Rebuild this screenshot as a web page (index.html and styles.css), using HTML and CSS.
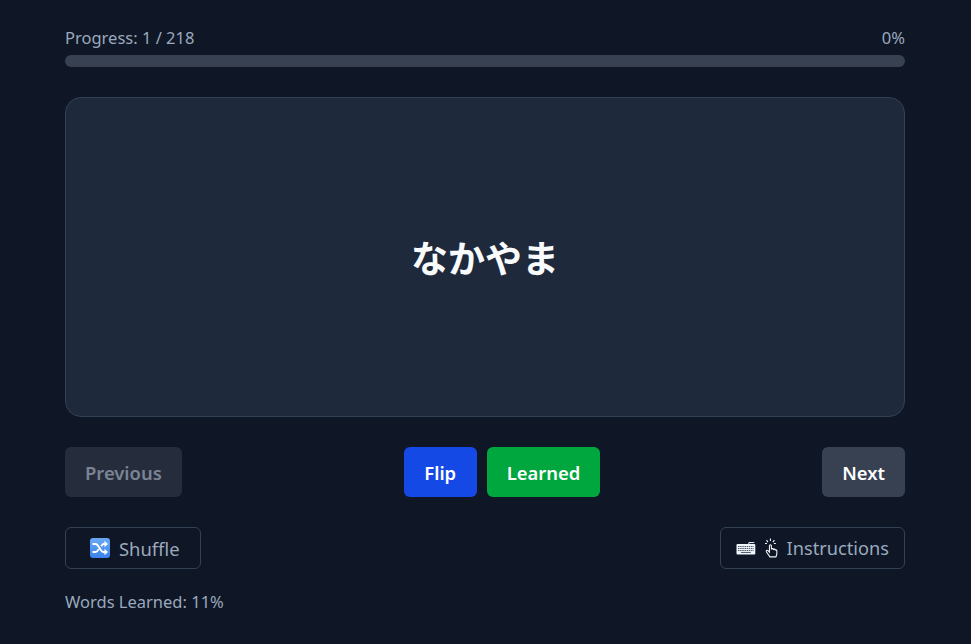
FILE: index.html
```html
<!DOCTYPE html>
<html lang="en">
<head>
    <meta charset="UTF-8">
    <meta name="viewport" content="width=device-width, initial-scale=1.0">
    <title>Flashcards</title>
    <link rel="stylesheet" href="styles.css">
</head>
<body>
    <div class="container">
        <div class="progress-label">
            <span>Progress: 1 / 218</span>
            <span>0%</span>
        </div>
        <div class="progress-track"></div>

        <div class="card">
            <div class="card-word" lang="ja">なかやま</div>
        </div>

        <div class="controls">
            <button class="btn btn-prev" disabled>Previous</button>
            <div class="controls-middle">
                <button class="btn btn-flip">Flip</button>
                <button class="btn btn-learned">Learned</button>
            </div>
            <button class="btn btn-next">Next</button>
        </div>

        <div class="tools">
            <button class="btn-outline btn-shuffle">
                <svg class="icon-shuffle" viewBox="0 0 20 20" width="20" height="20">
                    <defs>
                        <linearGradient id="shuffleBg" x1="0" y1="0" x2="0" y2="1">
                            <stop offset="0" stop-color="#6aa9f4"/>
                            <stop offset="1" stop-color="#3b82ea"/>
                        </linearGradient>
                    </defs>
                    <rect width="20" height="20" rx="3" fill="url(#shuffleBg)"/>
                    <path d="M2.500 6h3.200c3 0 4.600 8 7.600 8h1.700M2.500 14h3.200c1.200 0 2.200-1.300 3-2.800M11.200 8.200c.7-1.200 1.300-2.200 2.100-2.200h1.700" fill="none" stroke="#fff" stroke-width="1.800"/>
                    <path d="M14.500 2.800l3.500 3.200-3.500 3.200zM14.500 10.800l3.500 3.200-3.500 3.200z" fill="#fff"/>
                </svg>
                Shuffle
            </button>
            <button class="btn-outline btn-instructions">
                <svg class="icon-keyboard" viewBox="0 0 20 14" width="20" height="14">
                    <path d="M13 3V1.500h5.500" fill="none" stroke="#f1f5f9" stroke-width="1"/>
                    <rect x=".5" y="3" width="19" height="10.500" rx="1" fill="#f1f5f9"/>
                    <path d="M2 5.500h16M2 7.500h16M2 9.500h16" stroke="#475569" stroke-width="1" stroke-dasharray="1.500 .7"/>
                    <path d="M5 11.500h10" stroke="#475569" stroke-width="1"/>
                </svg>
                <svg class="icon-hand" viewBox="0 0 16 20" width="16" height="20">
                    <path d="M6 19l-3.500-5c-.8-1.200.6-2.200 1.500-1.300l1.500 1.500V7.700c0-1.400 2-1.400 2 0v3.800c0-1.200 2-1.200 2 0v.5c0-1.100 1.800-1.100 1.800 0v.6c0-1 1.700-1 1.700.2v2.700c0 1.300-.5 2.200-1 3.500z" fill="none" stroke="#f1f5f9" stroke-width="1.100"/>
                    <path d="M6.500 .5v2.500M2.500 2l1.500 2M10.500 2l-1.500 2M1 5.500h2M10 5.500h2" stroke="#f1f5f9" stroke-width="1.100"/>
                </svg>
                Instructions
            </button>
        </div>

        <div class="learned-stat">Words Learned: 11%</div>
    </div>
</body>
</html>
```

FILE: styles.css
```css
body {
    font-family: "Noto Sans", "Noto Sans CJK JP", sans-serif;
    background-color: #0f1626;
    margin: 0;
    color: #9aa9bd;
}
.container {
    width: 840px;
    margin-left: 65px;
    padding-top: 27px;
}
.progress-label {
    display: flex;
    justify-content: space-between;
    font-size: 16.500px;
    line-height: 22px;
    margin-bottom: 6px;
}
.progress-track {
    height: 12px;
    border-radius: 6px;
    background-color: #374151;
    margin-bottom: 30px;
}
.card {
    height: 318px;
    display: flex;
    align-items: center;
    justify-content: center;
    background-color: #1e293b;
    border: 1px solid #334155;
    border-radius: 16px;
    margin-bottom: 30px;
}
.card-word {
    font-family: "Noto Sans CJK JP", sans-serif;
    font-size: 37px;
    font-weight: 700;
    color: #f8fafc;
}
.controls {
    display: flex;
    justify-content: space-between;
    margin-bottom: 30px;
}
.controls-middle {
    display: flex;
    gap: 10px;
}
.btn {
    height: 50px;
    padding: 0 20px;
    border: none;
    border-radius: 6px;
    font-family: inherit;
    font-size: 18.400px;
    font-weight: 600;
    color: #fff;
    cursor: pointer;
}
.btn-prev {
    background-color: #252d3d;
    color: #7b8494;
}
.btn-flip {
    width: 73px;
    padding: 0;
    background-color: #1549e6;
}
.btn-learned {
    background-color: #00a63e;
}
.btn-next {
    background-color: #374151;
}
.tools {
    display: flex;
    justify-content: space-between;
    margin-bottom: 22px;
}
.btn-outline {
    display: flex;
    align-items: center;
    height: 42px;
    padding: 0 15px;
    background: none;
    border: 1px solid #334155;
    border-radius: 6px;
    font-family: inherit;
    font-size: 18.400px;
    color: #9aa9bd;
    cursor: pointer;
}
.btn-shuffle {
    padding-right: 20px;
}
.btn-instructions {
    width: 185px;
    font-size: 18.200px;
}
.icon-shuffle {
    margin: 0 9px;
}
.icon-keyboard {
    margin-right: 8px;
}
.icon-hand {
    margin-right: 7px;
}
.learned-stat {
    font-size: 16.500px;
    line-height: 22px;
}
```
